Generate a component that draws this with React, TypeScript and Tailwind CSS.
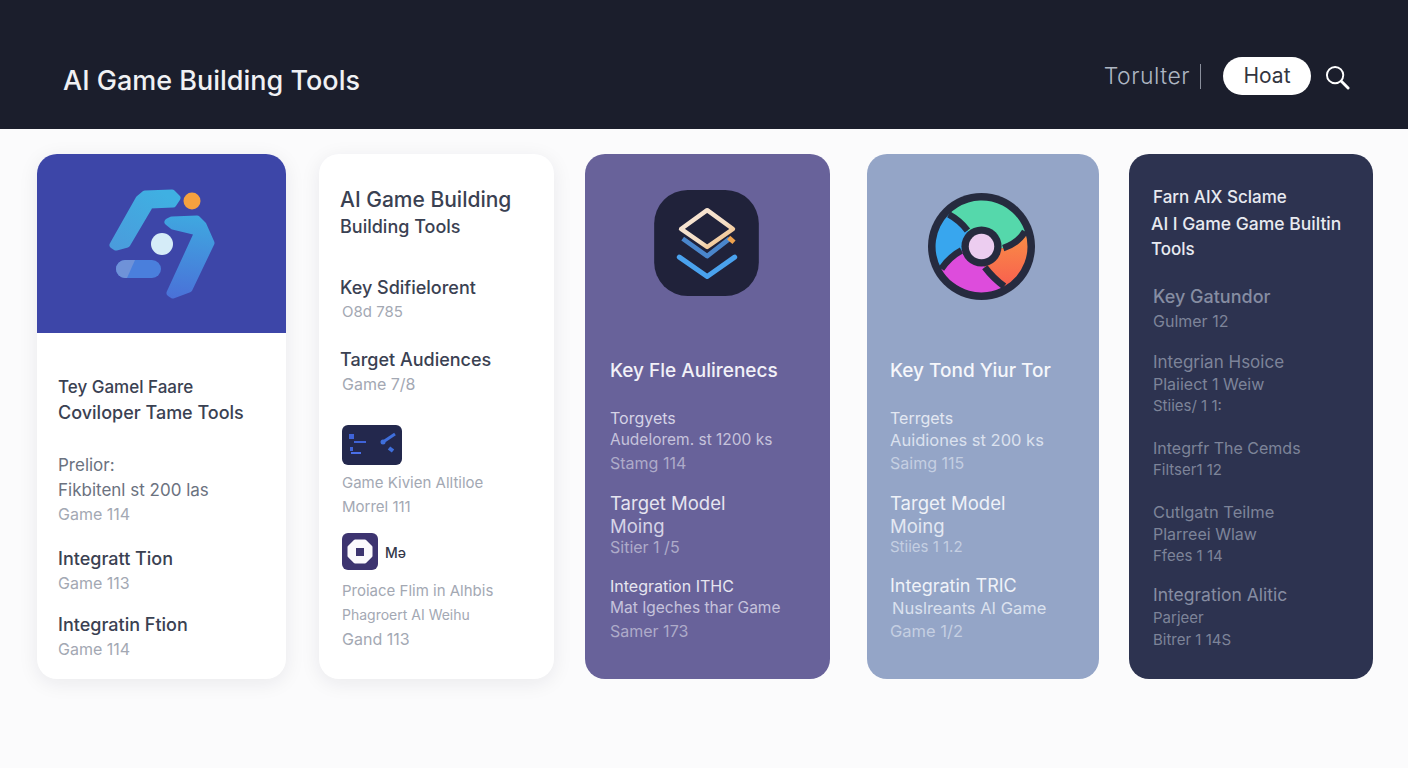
import React from 'react';

const font = { fontFamily: 'Inter, "Liberation Sans", sans-serif' };

const T = ({ className, children }: { className: string; children: React.ReactNode }) => (
  <p className={`h-6 leading-6 whitespace-nowrap ${className}`}>{children}</p>
);

const SearchIcon = () => (
  <svg className="ml-[14px] mt-[2px]" width="25" height="25" viewBox="0 0 26 26" fill="none">
    <circle cx="10.5" cy="10.5" r="8.5" stroke="#ffffff" strokeWidth="2" />
    <path d="M17 17 L24 24" stroke="#ffffff" strokeWidth="3" strokeLinecap="round" />
  </svg>
);

const LogoMark = () => (
  <svg width="115" height="120" viewBox="105 185 115 120" fill="none">
    <defs>
      <linearGradient id="logoA" gradientUnits="userSpaceOnUse" x1="160" y1="190" x2="120" y2="250">
        <stop offset="0" stopColor="#3fb0e2" />
        <stop offset="1" stopColor="#4a9cdc" />
      </linearGradient>
      <linearGradient id="logoB" gradientUnits="userSpaceOnUse" x1="190" y1="215" x2="180" y2="300">
        <stop offset="0" stopColor="#3fa8e0" />
        <stop offset="1" stopColor="#4a70d8" />
      </linearGradient>
    </defs>
    <path d="M146 194 L173 193 L178 198 L174 204 L151 205 L128 244 L117 247 L114 245 L140 199 Z" fill="url(#logoA)" stroke="url(#logoA)" strokeWidth="7" strokeLinejoin="round" />
    <path d="M173 220 L198 219 L204 225 L212 243 L190 289 L174 295 L171 293 L199 232 L174 226 L169 222 Z" fill="url(#logoB)" stroke="url(#logoB)" strokeWidth="7" strokeLinejoin="round" />
    <rect x="117" y="260" width="45" height="18" rx="9" fill="#4a7fdc" />
    <path d="M126 260 H136 L128 278 H126 A9 9 0 0 1 126 260 Z" fill="#6f92d8" />
    <circle cx="163" cy="244" r="11" fill="#d5ecf8" />
    <circle cx="193" cy="201" r="8.5" fill="#f5a13f" />
  </svg>
);

const StackIcon = () => (
  <svg width="105" height="106" viewBox="0 0 312 316" fill="none">
    <defs>
      <linearGradient id="diamond" x1="0" y1="0" x2="1" y2="1">
        <stop offset="0" stopColor="#f8e6d6" />
        <stop offset="0.6" stopColor="#f5dfc6" />
        <stop offset="1" stopColor="#f0b066" />
      </linearGradient>
    </defs>
    <rect width="312" height="316" rx="100" fill="#20223a" />
    <path d="M85 145 L158 197 L225 145" stroke="#4a86cc" strokeWidth="14" strokeLinejoin="round" />
    <path d="M222 142 L238 156" stroke="#eea24e" strokeWidth="14" />
    <path d="M75 200 L158 258 L240 200" stroke="#4aa2ee" strokeWidth="15" strokeLinejoin="round" strokeLinecap="round" />
    <path d="M158 60 L235 116 L158 170 L80 116 Z" fill="#20223a" stroke="url(#diamond)" strokeWidth="13" strokeLinejoin="round" />
  </svg>
);

const WheelIcon = () => (
  <svg width="107" height="107" viewBox="0 0 320 320" fill="none">
    <defs>
      <linearGradient id="wheelOrange" x1="0" y1="0" x2="0" y2="1">
        <stop offset="0" stopColor="#f98f45" />
        <stop offset="1" stopColor="#f8604f" />
      </linearGradient>
    </defs>
    <circle cx="160" cy="160" r="160" fill="#262b3f" />
    <path d="M160 160 L118 112 Q95 82 62 64 A137 137 0 0 1 290 115 Q270 150 225 165 Z" fill="#55d8ab" />
    <path d="M160 160 L225 165 Q270 150 290 115 A137 137 0 0 1 228 279 Q195 255 170 222 Z" fill="url(#wheelOrange)" />
    <path d="M160 160 L170 222 Q195 255 228 279 A137 137 0 0 1 40 227 Q65 190 100 172 Z" fill="#dd4cdc" />
    <path d="M160 160 L100 172 Q65 190 40 227 A137 137 0 0 1 62 64 Q95 82 118 112 Z" fill="#38a6ee" />
    <g stroke="#262b3f" strokeWidth="20">
      <path d="M118 112 Q95 82 62 64" />
      <path d="M225 165 Q270 150 290 115" />
      <path d="M170 222 Q195 255 228 279" />
      <path d="M100 172 Q65 190 40 227" />
    </g>
    <circle cx="160" cy="160" r="60" fill="#262b3f" />
    <circle cx="160" cy="160" r="38" fill="#eccdf0" />
  </svg>
);

const CodeBadge = () => (
  <svg width="60" height="40" viewBox="0 0 60 40">
    <rect width="60" height="40" rx="6" fill="#23284d" />
    <rect x="7" y="9" width="5" height="5" fill="#3f63d8" />
    <rect x="12" y="16" width="12" height="2" fill="#3f63d8" />
    <rect x="8" y="22" width="3" height="4" fill="#3f63d8" />
    <rect x="9" y="27" width="10" height="2" fill="#4a6fe8" />
    <path d="M53 9 L41 17" stroke="#3f6fdc" strokeWidth="3" />
    <circle cx="41" cy="17" r="2.5" fill="#3f6fdc" />
    <path d="M47 23 L51 26" stroke="#3f6fdc" strokeWidth="4" />
  </svg>
);

const ChipBadge = () => (
  <svg width="36" height="37" viewBox="0 0 36 37">
    <rect width="36" height="37" rx="6" fill="#3d3470" />
    <path d="M13 8 H23 L29 14 V23 L23 29 H13 L7 23 V14 Z" fill="#fbf9fd" stroke="#fbf9fd" strokeWidth="3" strokeLinejoin="round" />
    <rect x="14" y="15" width="8" height="8" fill="#3d3470" />
  </svg>
);

export default function App() {
  return (
    <div className="min-h-[768px] bg-[#fbfbfc]" style={font}>
      <header className="h-[129px] bg-[#1b1e2c] flex items-center pl-[63px] pr-[58px]">
        <h1 className="mt-[33px] text-[27px] font-medium text-[#f0f1f4]">AI Game Building Tools</h1>
        <div className="ml-auto flex items-center mt-[23px]">
          <span className="text-[23px] font-light tracking-[0.5px] text-[#aeb6c3]">Torulter</span>
          <span className="ml-[10px] w-px h-[25px] bg-[#8a8f9c]" />
          <span className="ml-[22px] w-[88px] h-[38px] rounded-full bg-white flex items-center justify-center text-[21px] text-[#33363f]">Hoat</span>
          <SearchIcon />
        </div>
      </header>

      <main className="flex items-start pl-[37px] pt-[25px]">
        <section className="w-[249px] h-[525px] rounded-[20px] bg-white overflow-hidden shadow-[0_4px_20px_rgba(20,25,50,0.08)]">
          <div className="h-[179px] bg-[#3d46a8] flex items-center justify-center pt-[3px]">
            <LogoMark />
          </div>
          <div className="pl-[21px] pt-[42px] text-[#3a4152]">
            <T className="text-[17px] font-medium">Tey Gamel Faare</T>
            <T className="mt-[2px] text-[18px] font-medium">Coviloper Tame Tools</T>
            <T className="mt-[28px] text-[17px] text-[#6b7280]">Prelior:</T>
            <T className="mt-[1px] text-[17px] text-[#6b7280]">Fikbitenl st 200 las</T>
            <T className="mt-0 text-[16px] text-[#a3a8b3]">Game 114</T>
            <T className="mt-[21px] text-[18px] font-medium">Integratt Tion</T>
            <T className="mt-0 text-[16px] text-[#a3a8b3]">Game 113</T>
            <T className="mt-[18px] text-[18px] font-medium">Integratin Ftion</T>
            <T className="mt-0 text-[16px] text-[#a3a8b3]">Game 114</T>
          </div>
        </section>

        <section className="ml-[33px] w-[235px] h-[525px] rounded-[20px] bg-white pl-[21px] pt-[34px] text-[#3a4152] shadow-[0_4px_20px_rgba(20,25,50,0.08)]">
          <T className="text-[21px] font-medium">AI Game Building</T>
          <T className="mt-[3px] text-[18px] font-medium">Building Tools</T>
          <T className="mt-[37px] text-[18px] font-medium">Key Sdifielorent</T>
          <T className="mt-0 ml-[2px] text-[15px] text-[#a3a8b3]">O8d 785</T>
          <T className="mt-[24px] text-[18px] font-medium">Target Audiences</T>
          <T className="mt-0 ml-[2px] text-[16px] text-[#a3a8b3]">Game 7/8</T>
          <div className="mt-[29px] ml-[2px]">
            <CodeBadge />
          </div>
          <T className="mt-[6px] ml-[2px] text-[15px] text-[#a3a8b3]">Game Kivien Alltiloe</T>
          <T className="mt-0 ml-[2px] text-[15px] text-[#a3a8b3]">Morrel 111</T>
          <div className="mt-[14px] ml-[2px] flex items-center gap-[7px]">
            <ChipBadge />
            <span className="mt-[2px] text-[14px] font-medium text-[#33384a]">Mə</span>
          </div>
          <T className="mt-[9px] ml-[2px] text-[15px] text-[#a3a8b3]">Proiace Flim in Alhbis</T>
          <T className="mt-0 ml-[2px] text-[14px] text-[#a3a8b3]">Phagroert AI Weihu</T>
          <T className="mt-0 ml-[2px] text-[16px] text-[#a3a8b3]">Gand 113</T>
        </section>

        <section className="ml-[31px] w-[245px] h-[525px] rounded-[20px] bg-[#68629a] pl-[25px] pt-[36px] text-[#f2f1f8]">
          <div className="ml-[44px]">
            <StackIcon />
          </div>
          <T className="mt-[63px] text-[19px] font-medium">Key Fle Aulirenecs</T>
          <T className="mt-[23px] text-[16px] text-[#d5d3e6]">Torgyets</T>
          <T className="mt-[-2px] text-[15.5px] text-[#c6c3dc]">Audelorem. st 1200 ks</T>
          <T className="mt-[-1px] text-[16px] text-[#aeabc9]">Stamg 114</T>
          <T className="mt-[16px] text-[18.5px] text-[#e6e5f0]">Target Model</T>
          <T className="mt-[-1px] text-[18.5px] text-[#d5d3e6]">Moing</T>
          <T className="mt-[-3px] text-[16px] text-[#aeabc9]">Sitier 1 /5</T>
          <T className="mt-[15px] text-[16px] text-[#e6e5f0]">Integration ITHC</T>
          <T className="mt-[-2px] text-[15.5px] text-[#c6c3dc]">Mat Igeches thar Game</T>
          <T className="mt-[-1px] text-[16px] text-[#aeabc9]">Samer 173</T>
        </section>

        <section className="ml-[37px] w-[232px] h-[525px] rounded-[20px] bg-[#94a5c7] pl-[23px] pt-[39px] text-[#f6f7fb]">
          <div className="ml-[38px]">
            <WheelIcon />
          </div>
          <T className="mt-[59px] text-[19px] font-medium">Key Tond Yiur Tor</T>
          <T className="mt-[23px] text-[16px] text-[#e3e8f2]">Terrgets</T>
          <T className="mt-[-2px] text-[16.5px] text-[#dbe1ee]">Auidiones st 200 ks</T>
          <T className="mt-[-1px] text-[16px] text-[#c5cfe2]">Saimg 115</T>
          <T className="mt-[16px] text-[18.5px] text-[#eff2f8]">Target Model</T>
          <T className="mt-[-1px] text-[18.5px] text-[#e3e8f2]">Moing</T>
          <T className="mt-[-3px] text-[15px] text-[#c5cfe2]">Stiies 1 1.2</T>
          <T className="mt-[15px] text-[18px] text-[#eff2f8]">Integratin TRIC</T>
          <T className="mt-[-2px] ml-[2px] text-[16.5px] text-[#dbe1ee]">Nuslreants AI Game</T>
          <T className="mt-[-1px] text-[16.5px] text-[#c5cfe2]">Game 1/2</T>
        </section>

        <section className="ml-[30px] w-[244px] h-[525px] rounded-[20px] bg-[#2d3350] pl-[24px] pt-[31px] text-[#7d8499]">
          <T className="text-[17px] font-medium text-[#e8eaf0]">Farn AIX Sclame</T>
          <T className="mt-[3px] -ml-[2px] text-[17.5px] font-medium text-[#e8eaf0]">AI I Game Game Builtin</T>
          <T className="mt-[1px] -ml-[2px] text-[17px] font-medium text-[#e8eaf0]">Tools</T>
          <T className="mt-[24px] text-[18px] font-medium text-[#868da2]">Key Gatundor</T>
          <T className="mt-0 text-[16px]">Gulmer 12</T>
          <T className="mt-[17px] text-[17px]">Integrian Hsoice</T>
          <T className="mt-[-2px] text-[16px]">Plaiiect 1 Weiw</T>
          <T className="mt-[-2px] text-[15px]">Stiies/ 1 1:</T>
          <T className="mt-[18px] text-[16px]">Integrfr The Cemds</T>
          <T className="mt-[-2px] text-[15px]">Filtser1 12</T>
          <T className="mt-[18px] text-[16.5px]">Cutlgatn Teilme</T>
          <T className="mt-[-2px] text-[16px]">Plarreei Wlaw</T>
          <T className="mt-[-2px] text-[15px]">Ffees 1 14</T>
          <T className="mt-[15px] text-[17.5px] text-[#868da2]">Integration Alitic</T>
          <T className="mt-[-1px] text-[15px]">Parjeer</T>
          <T className="mt-[-2px] text-[15px]">Bitrer 1 14S</T>
        </section>
      </main>
    </div>
  );
}
